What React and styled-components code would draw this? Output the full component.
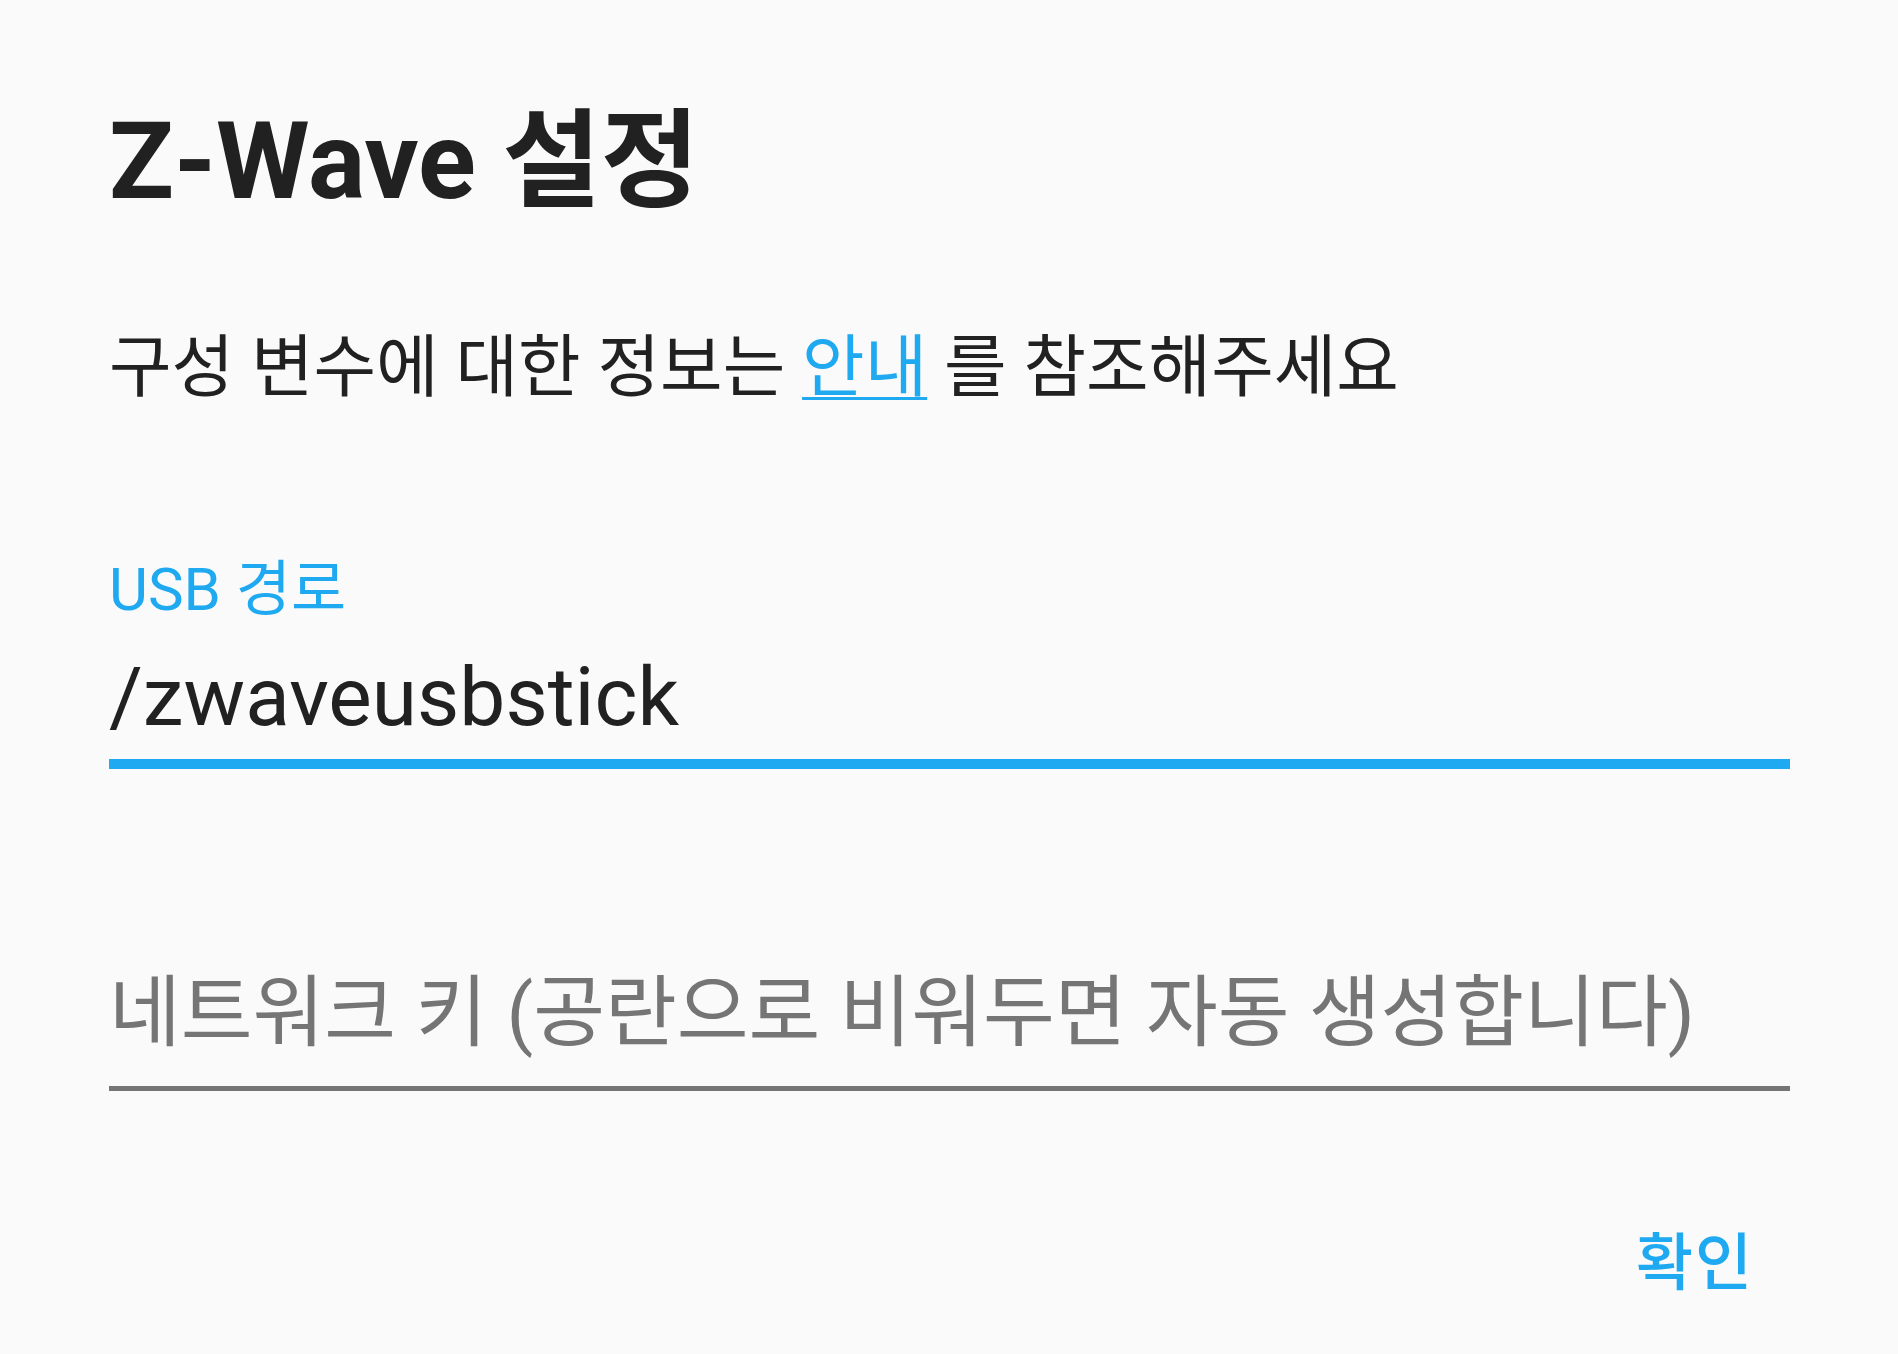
import React from "react";
import styled, { createGlobalStyle } from "styled-components";

const BLUE = "#1ea9f1";

const Global = createGlobalStyle`
  html, body { margin: 0; padding: 0; background: #fafafa; }
  body { font-family: Roboto, "Noto Sans CJK KR", sans-serif; }
`;

const Page = styled.div`
  min-height: 1354px;
  box-sizing: border-box;
  padding: 108px 108px 0 109px;
  background: #fafafa;
  display: flex;
  flex-direction: column;
`;

const Title = styled.h2`
  margin: 0;
  font-family: Roboto, "Noto Sans CJK KR", sans-serif;
  font-weight: 700;
  font-size: 107px;
  line-height: 108px;
  color: #212121;
`;

const Description = styled.p`
  margin: 112px 0 0;
  font-family: Roboto, "Noto Sans CJK KR", sans-serif;
  font-size: 68px;
  line-height: 80px;
  color: #212121;
`;

const Link = styled.a`
  color: ${BLUE};
  text-decoration: underline;
  text-decoration-thickness: 3px;
  text-underline-offset: 6px;
`;

const Field = styled.div`
  display: flex;
  flex-direction: column;
  margin-top: ${(p) => p.$top}px;
  border-bottom: ${(p) => (p.$focused ? `10px solid ${BLUE}` : "5px solid #757575")};
`;

const Label = styled.label`
  font-size: 60px;
  line-height: 70px;
  color: ${BLUE};
`;

const Value = styled.div`
  font-size: ${(p) => p.$size}px;
  line-height: 96px;
  color: ${(p) => (p.$placeholder ? "#757575" : "#212121")};
  padding: ${(p) => p.$pad};
`;

const Actions = styled.div`
  display: flex;
  justify-content: flex-end;
  margin-top: 138px;
  padding-right: 36px;
`;

const Button = styled.button`
  border: none;
  background: transparent;
  padding: 0;
  font-family: Roboto, "Noto Sans CJK KR", sans-serif;
  font-size: 62px;
  font-weight: 500;
  line-height: 70px;
  color: ${BLUE};
  letter-spacing: 2px;
`;

export default function App() {
  return (
    <>
      <Global />
      <Page>
        <Title>Z-Wave 설정</Title>
        <Description>
          구성 변수에 대한 정보는 <Link href="#">안내</Link> 를 참조해주세요
        </Description>
        <Field $focused $top={147}>
          <Label>USB 경로</Label>
          <Value $size={82} $pad="24px 0 14px">/zwaveusbstick</Value>
        </Field>
        <Field $top={197}>
          <Value $placeholder $size={78} $pad="0 0 24px">
            네트워크 키 (공란으로 비워두면 자동 생성합니다)
          </Value>
        </Field>
        <Actions>
          <Button>확인</Button>
        </Actions>
      </Page>
    </>
  );
}
